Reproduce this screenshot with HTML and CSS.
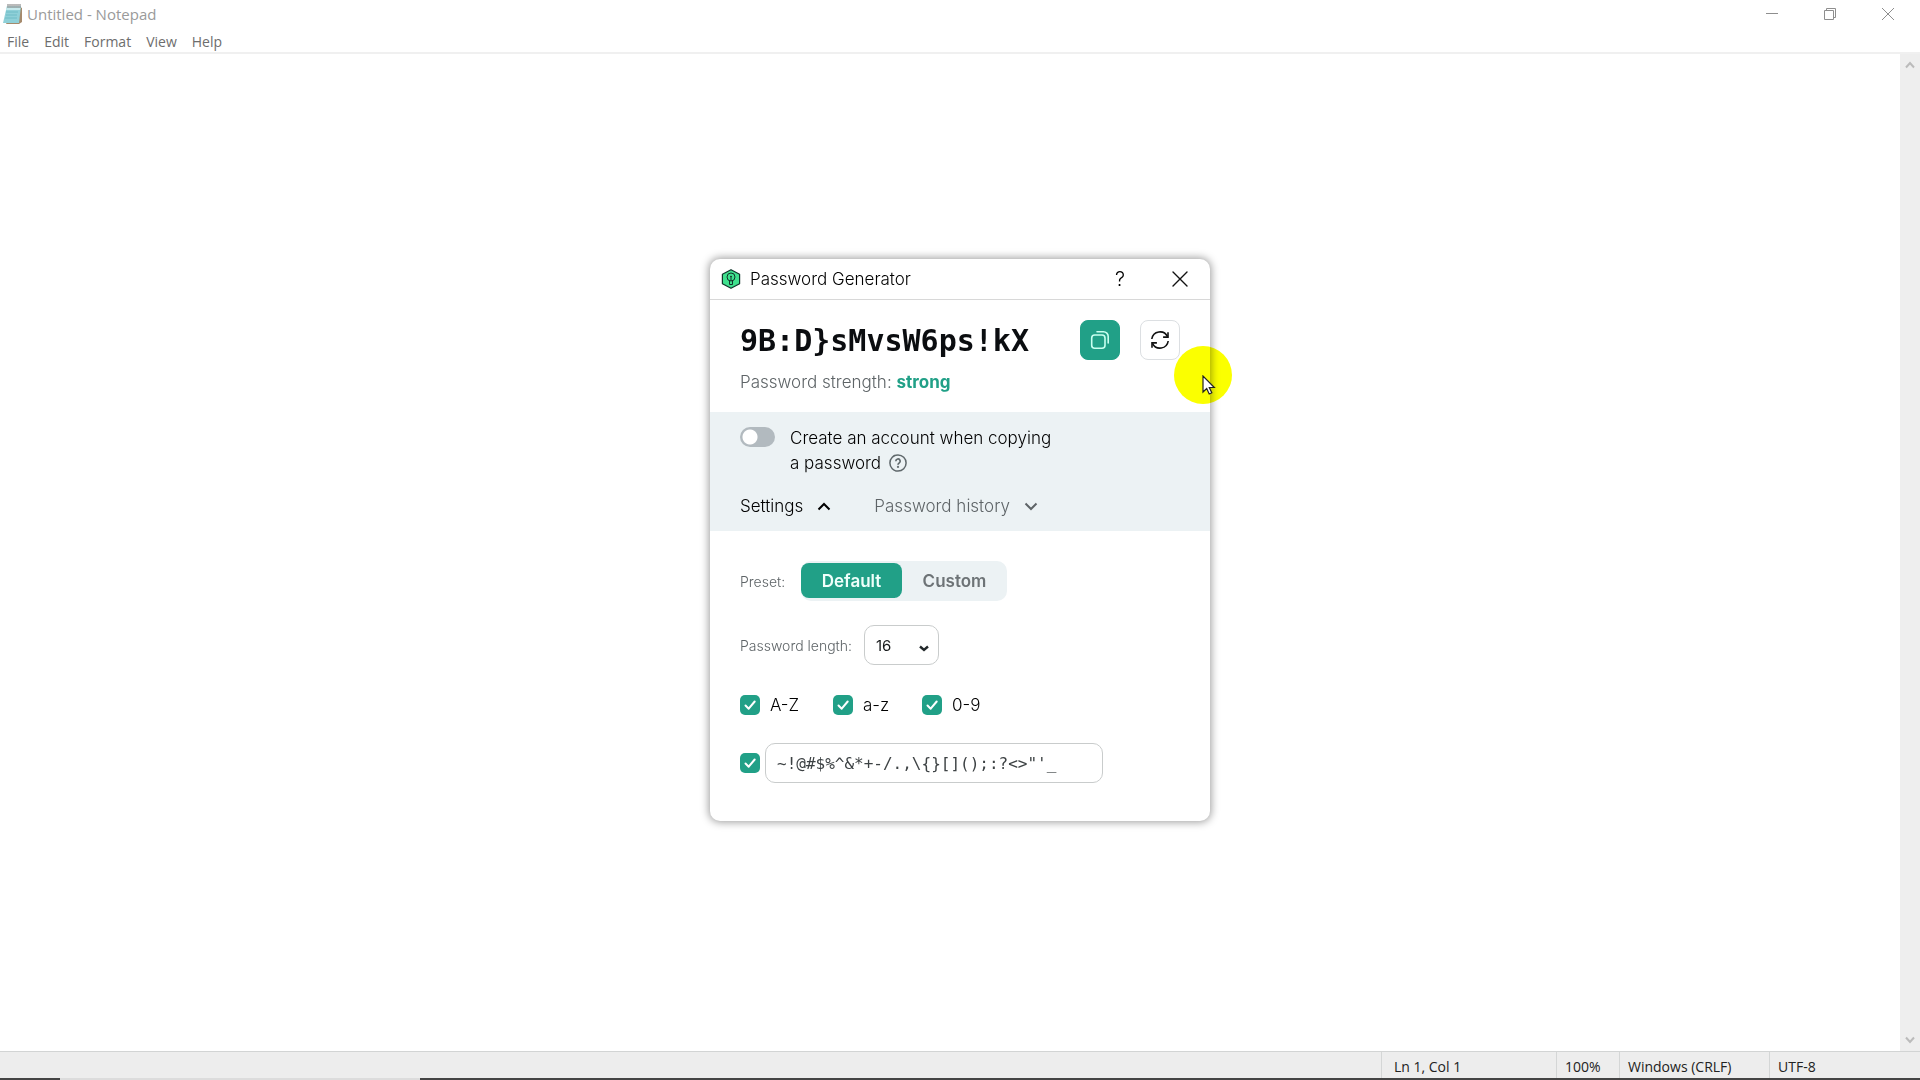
FILE: index.html
```html
<!DOCTYPE html>
<html lang="en">
<head>
<meta charset="utf-8">
<title>Untitled - Notepad</title>
<link rel="stylesheet" href="styles.css">
</head>
<body>
<div class="notepad">
  <header class="titlebar">
    <svg class="app-icon" width="20" height="22" viewBox="0 0 20 22" aria-hidden="true">
      <path d="M17 4l2 1v14l-3 2H3l1-2z" fill="#a58a6c"/>
      <path d="M4 3h14l-2 17H0z" fill="#8fd0d8"/>
      <path d="M4 3h14l-1 4H3z" fill="#c5e9ec"/>
      <path d="M3 9h12M3 12h11M2 15h12" stroke="#6fbcc6" fill="none"/>
      <path d="M5 1v4M7 1v4M9 1v4M11 1v4M13 1v4M15 1v4M17 1v4" stroke="#777" fill="none"/>
    </svg>
    <h1 class="window-title">Untitled - Notepad</h1>
    <div class="window-controls">
      <button class="window-button" aria-label="Minimize"><svg width="12" height="12" viewBox="0 0 12 12"><path d="M0 5.500h12"/></svg></button>
      <button class="window-button" aria-label="Restore"><svg width="12" height="12" viewBox="0 0 12 12"><path d="M.5 2.500h9v9h-9zM2.500 2.500v-2h9v9h-2"/></svg></button>
      <button class="window-button" aria-label="Close"><svg width="12" height="12" viewBox="0 0 12 12"><path d="M0 0l12 12M12 0L0 12"/></svg></button>
    </div>
  </header>
  <nav class="menubar">
    <button class="menu">File</button>
    <button class="menu">Edit</button>
    <button class="menu">Format</button>
    <button class="menu">View</button>
    <button class="menu">Help</button>
  </nav>
  <div class="workspace">
    <textarea class="editor" aria-label="Text editor"></textarea>
    <div class="scrollbar">
      <button class="scroll-button" aria-label="Scroll up"><svg width="10" height="8" viewBox="0 0 10 8"><path d="M1 6.500l4-4.500 4 4.500"/></svg></button>
      <button class="scroll-button" aria-label="Scroll down"><svg width="10" height="8" viewBox="0 0 10 8"><path d="M1 1.500L5 6l4-4.500"/></svg></button>
    </div>
  </div>
  <footer class="statusbar">
    <span class="status status-position">Ln 1, Col 1</span>
    <span class="status status-zoom">100%</span>
    <span class="status status-eol">Windows (CRLF)</span>
    <span class="status status-encoding">UTF-8</span>
  </footer>
  <div class="taskbar"><div class="taskbar-active"></div></div>
</div>

<div class="overlay">
  <section class="dialog" aria-labelledby="dialog-title">
    <header class="dialog-header">
      <svg width="20" height="20" viewBox="0 0 20 20" aria-hidden="true">
        <path d="M10 .7l8.600 4.500v9.600L10 19.300l-8.600-4.500V5.200z" fill="#3fe08d" stroke="#10352b" stroke-width="1.200" stroke-linejoin="round"/>
        <circle cx="10" cy="8" r="4" fill="none" stroke="#10352b"/>
        <circle cx="10" cy="7.800" r="1" fill="#10352b"/>
        <path d="M8.500 11.500v4h3v-4M10 9v3" fill="none" stroke="#10352b"/>
      </svg>
      <h2 class="dialog-title" id="dialog-title">Password Generator</h2>
      <button class="header-button header-help" aria-label="Help">?</button>
      <button class="header-button" aria-label="Close dialog"><svg width="16" height="16" viewBox="0 0 16 16" fill="none" stroke="#111" stroke-width="1.400" stroke-linecap="round"><path d="M1 1l14 14M15 1L1 15"/></svg></button>
    </header>
    <div class="result">
      <div class="result-row">
        <output class="password">9B:D}sMvsW6ps!kX</output>
        <button class="action action-copy" aria-label="Copy password">
          <svg width="20" height="20" viewBox="0 0 20 20" fill="none" stroke="#c8fff0" stroke-width="1.600" stroke-linecap="round"><rect x="1.700" y="5" width="13.300" height="13.300" rx="3"/><path d="M7 1.800h6.500a4.700 4.700 0 0 1 4.700 4.700V13"/></svg>
        </button>
        <button class="action" aria-label="Generate new password">
          <svg width="20" height="20" viewBox="0 0 20 20" fill="none" stroke="#111" stroke-width="1.600"><path d="M1.800 9A8.300 8.300 0 0 1 17.500 6.600M18.200 11A8.300 8.300 0 0 1 2.500 13.400"/><path d="M18 2.200v4.900h-4.900M2 17.800v-4.900h4.900"/></svg>
        </button>
      </div>
      <p class="strength">Password strength: <strong class="strength-value">strong</strong></p>
    </div>
    <div class="options">
      <div class="account-row">
        <input type="checkbox" role="switch" class="switch" id="create-account">
        <label class="account-label" for="create-account">Create an account when copying<br>a password
          <svg class="hint" width="18" height="18" viewBox="0 0 18 18" fill="none" stroke="#5f686b" stroke-width="1.500" aria-hidden="true"><circle cx="9" cy="9" r="8.100"/><path d="M6.800 7.200a2.200 2.200 0 1 1 3.300 1.900c-.8.500-1.100.8-1.100 1.700" stroke-width="1.700"/><circle cx="9" cy="12.900" r=".4"/></svg>
        </label>
      </div>
      <div class="tabs">
        <button class="tab tab-active">Settings <svg width="14" height="9" viewBox="0 0 14 9"><path d="M1.500 7.500L7 2l5.500 5.500"/></svg></button>
        <button class="tab">Password history <svg width="14" height="9" viewBox="0 0 14 9"><path d="M1.500 1.500L7 7l5.500-5.500"/></svg></button>
      </div>
    </div>
    <form class="settings">
      <div class="field">
        <span class="field-label preset-label">Preset:</span>
        <div class="segments">
          <button type="button" class="segment segment-active">Default</button>
          <button type="button" class="segment">Custom</button>
        </div>
      </div>
      <div class="field">
        <label class="field-label length-label" for="length">Password length:</label>
        <div class="select-box">
          <select class="select" id="length"><option>16</option></select>
          <svg class="select-arrow" width="10" height="7" viewBox="0 0 10 7" aria-hidden="true"><path d="M1 1.500l4 3.500 4-3.500" fill="none" stroke="#22282a" stroke-width="2.400"/></svg>
        </div>
      </div>
      <div class="charsets">
        <label class="charset charset-upper"><input type="checkbox" class="check" checked>A-Z</label>
        <label class="charset charset-lower"><input type="checkbox" class="check" checked>a-z</label>
        <label class="charset"><input type="checkbox" class="check" checked>0-9</label>
      </div>
      <div class="symbols-row">
        <input type="checkbox" class="check" aria-label="Use symbols" checked>
        <input type="text" class="symbols" aria-label="Symbols" value="~!@#$%^&amp;*+-/.,\{}[]();:?&lt;&gt;&quot;'_">
      </div>
    </form>
  </section>
  <div class="pointer-halo"></div>
  <svg class="pointer" width="14" height="20" viewBox="0 0 14 20" aria-hidden="true"><path d="M1 1v16l3.700-3.500L7.200 19l2.600-1.200-2.500-5.300h5z" fill="#fff" stroke="#222" stroke-width="1.200"/></svg>
</div>
</body>
</html>
```
FILE: styles.css
```css
* { box-sizing: border-box; }

body {
  margin: 0;
  background: #fff;
  font-family: "Open Sans", "Noto Sans", sans-serif;
}

button, input, select {
  margin: 0;
  padding: 0;
  border: 0;
  background: none;
  color: inherit;
  font: inherit;
}

h1, h2, p { margin: 0; font-weight: inherit; }

svg { flex: none; }

/* Notepad window */
.notepad {
  display: flex;
  flex-direction: column;
  height: 100vh;
  font-size: 14px;
}

.titlebar {
  display: flex;
  align-items: center;
  height: 28px;
  padding-left: 3px;
}

.window-title {
  margin-left: 4px;
  color: #9a9a9a;
  font-size: 15px;
  font-weight: 400;
}

.window-controls {
  display: flex;
  margin-left: auto;
  padding-right: 3px;
}

.window-button {
  display: grid;
  place-items: center;
  width: 58px;
  height: 28px;
}

.window-button svg { fill: none; stroke: #8e8e8e; }

.menubar {
  display: flex;
  align-items: center;
  gap: 15px;
  height: 26px;
  padding: 2px 7px 0;
  border-bottom: 2px solid #f0f0f0;
  color: #6d6d6d;
}

.workspace { display: flex; flex: 1; min-height: 0; }

.editor {
  flex: 1;
  padding: 4px;
  border: 0;
  outline: 0;
  resize: none;
  background: #fff;
}

.scrollbar {
  display: flex;
  flex-direction: column;
  justify-content: space-between;
  width: 20px;
  background: #eee;
}

.scroll-button { display: grid; place-items: center; height: 22px; }

.scroll-button svg { fill: none; stroke: #bbb; stroke-width: 2; }

.statusbar {
  display: flex;
  justify-content: flex-end;
  height: 27px;
  border-top: 1px solid #d2d4d4;
  background: #ededed;
  color: #222;
}

.status {
  padding-left: 8px;
  border-left: 1px solid #d4d6d6;
  line-height: 29px;
  white-space: nowrap;
}

.status-position { width: 175px; padding-left: 12px; }
.status-zoom { width: 63px; }
.status-eol { width: 150px; }
.status-encoding { width: 151px; }

.taskbar { height: 2px; padding-left: 60px; background: #444; }

.taskbar-active { width: 360px; height: 2px; background: #dcdcdc; }

/* Password generator */
.overlay {
  position: fixed;
  inset: 0;
  display: grid;
  place-items: center;
  font-family: Inter, "Liberation Sans", sans-serif;
}

.dialog {
  width: 500px;
  border-radius: 10px;
  background: #fff;
  box-shadow: 0 0 8px 1px rgba(0, 0, 0, .4);
  color: #000;
  font-size: 17px;
  font-weight: 300;
}

.dialog-header {
  display: flex;
  align-items: center;
  height: 41px;
  padding-left: 11px;
  border-bottom: 1px solid #d8d8d8;
}

.dialog-title {
  flex: 1;
  margin-left: 9px;
  font-size: 17px;
}

.header-button {
  display: grid;
  place-items: center;
  width: 60px;
  height: 40px;
}

.header-help { font-size: 20px; }

.result { height: 112px; padding: 20px 30px 0; }

.result-row { display: flex; align-items: center; gap: 20px; }

.password {
  flex: 1;
  padding-top: 2px;
  color: #0b0d10;
  font: bold 30px/38px "DejaVu Sans Mono", monospace;
}

.action {
  display: grid;
  place-items: center;
  width: 40px;
  height: 40px;
  border: 1px solid #dcdfe2;
  border-radius: 8px;
}

.action-copy { border-color: #21a087; background: #21a087; }

.strength { margin-top: 10px; color: #5e6467; line-height: 24px; }

.strength-value { color: #21a087; font-weight: 700; }

.options {
  height: 119px;
  padding: 14px 30px 0;
  background: #ecf2f4;
}

.account-row { display: flex; gap: 15px; }

.switch {
  flex: none;
  width: 35px;
  height: 20px;
  margin-top: 1px;
  border-radius: 10px;
  appearance: none;
  background: radial-gradient(circle at 10px 10px, #fff 7px, #b2babf 8px);
}

.account-label { line-height: 25px; }

.hint { margin-left: 3px; vertical-align: -3px; }

.tabs { display: flex; gap: 43px; margin-top: 18px; }

.tab {
  display: flex;
  align-items: center;
  gap: 14px;
  color: #5e6467;
  line-height: 24px;
}

.tab svg { fill: none; stroke: currentColor; stroke-width: 2; }

.tab-active { color: #000; }

.settings { padding: 30px 30px 38px; }

.field {
  display: flex;
  align-items: center;
  margin-bottom: 24px;
}

.field-label { color: #5e6467; font-size: 14px; white-space: nowrap; }

.preset-label { width: 61px; }
.length-label { width: 124px; }

.segments {
  display: flex;
  height: 40px;
  padding: 2px 0 3px;
  border-radius: 10px;
  background: #ecf2f4;
}

.segment {
  width: 105px;
  border-radius: 8px;
  color: #6d7376;
  font-weight: 600;
}

.segment-active { width: 101px; background: #21a087; color: #effffb; }

.select-box { position: relative; }

.select {
  width: 75px;
  height: 40px;
  padding-left: 11px;
  border: 1px solid #c9cccc;
  border-radius: 10px;
  appearance: none;
  color: #16191a;
  font-size: 15px;
  font-weight: 400;
}

.select-arrow { position: absolute; right: 10px; top: 20px; }

.charsets { display: flex; margin-top: 30px; }

.charset {
  display: flex;
  align-items: center;
  gap: 10px;
  line-height: 20px;
}

.charset-upper { width: 93px; }
.charset-lower { width: 89px; }

.check {
  flex: none;
  width: 20px;
  height: 20px;
  border-radius: 5px;
  appearance: none;
  background: #c9cfd2;
}

.check:checked {
  background: #21a087 url("data:image/svg+xml,%3Csvg xmlns='http://www.w3.org/2000/svg' viewBox='0 0 20 20'%3E%3Cpath d='M5.500 10.500l3.200 3.200 6-7.200' fill='none' stroke='%23fff' stroke-width='2' stroke-linecap='round' stroke-linejoin='round'/%3E%3C/svg%3E") center / 20px;
}

.symbols-row {
  display: flex;
  align-items: center;
  gap: 5px;
  margin-top: 28px;
}

.symbols {
  width: 338px;
  height: 40px;
  padding: 0 11px;
  border: 1px solid #c9cccc;
  border-radius: 10px;
  color: #3d4244;
  font: 16px "DejaVu Sans Mono", monospace;
}

/* Highlighted mouse pointer */
.pointer-halo,
.pointer {
  position: absolute;
  pointer-events: none;
}

.pointer-halo {
  top: calc(50% - 194px);
  left: calc(50% + 214px);
  width: 58px;
  height: 58px;
  border-radius: 50%;
  background: #fbff00;
  mix-blend-mode: multiply;
}

.pointer {
  top: calc(50% - 165px);
  left: calc(50% + 242px);
}
```
